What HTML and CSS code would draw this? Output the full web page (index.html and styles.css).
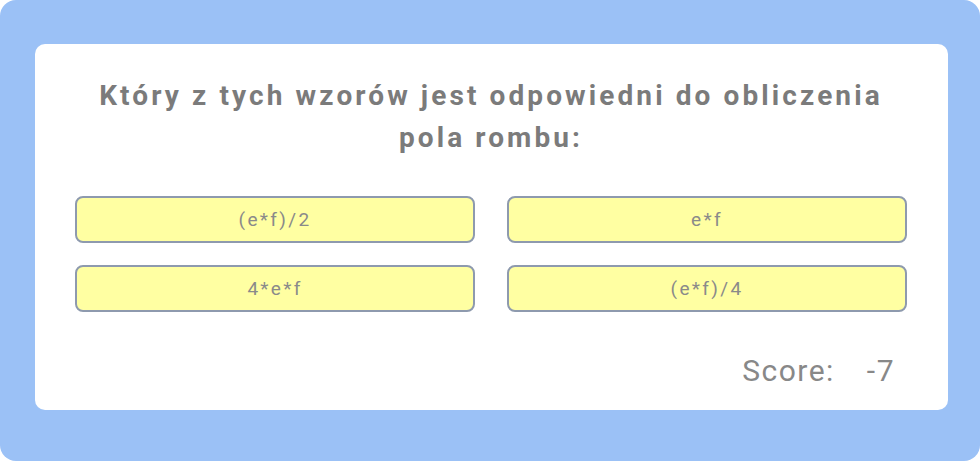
FILE: index.html
```html
<!DOCTYPE html>
<html lang="pl">
<head>
<meta charset="utf-8">
<title>Quiz</title>
<link rel="stylesheet" href="styles.css">
</head>
<body>
<div class="frame">
  <div class="card">
    <h1 class="question">Który z tych wzorów jest odpowiedni do obliczenia pola rombu:</h1>
    <div class="answers">
      <button class="answer">(e*f)/2</button>
      <button class="answer">e*f</button>
      <button class="answer">4*e*f</button>
      <button class="answer">(e*f)/4</button>
    </div>
    <div class="score"><span class="score-label">Score:</span><span class="score-value">-7</span></div>
  </div>
</div>
</body>
</html>
```
FILE: styles.css
```css
html, body {
  margin: 0;
  padding: 0;
  background: #ffffff;
}
body {
  font-family: Roboto, "Liberation Sans", sans-serif;
}
.frame {
  box-sizing: border-box;
  width: 980px;
  height: 461px;
  padding: 44px 32px 0 35px;
  background: #9bc1f6;
  border-radius: 16px;
}
.card {
  box-sizing: border-box;
  height: 366px;
  padding: 31px 41px 0 40px;
  background: #ffffff;
  border-radius: 10px;
}
.question {
  margin: 0;
  text-align: center;
  font-size: 28px;
  font-weight: 700;
  line-height: 42px;
  letter-spacing: 3.1px;
  color: #7b7b7b;
}
.answers {
  margin-top: 37px;
  display: grid;
  grid-template-columns: 1fr 1fr;
  column-gap: 32px;
  row-gap: 22px;
}
.answer {
  box-sizing: border-box;
  height: 47px;
  background: #ffffa2;
  border: 2px solid #8e9aae;
  border-radius: 8px;
  font-family: Roboto, "Liberation Sans", sans-serif;
  font-size: 19px;
  letter-spacing: 2.3px;
  color: #8a8a8a;
  padding: 0;
}
.score {
  margin-top: 41px;
  padding-right: 12px;
  display: flex;
  justify-content: flex-end;
  gap: 32px;
  font-size: 30px;
  line-height: 36px;
  letter-spacing: 1.5px;
  color: #888888;
}
```
